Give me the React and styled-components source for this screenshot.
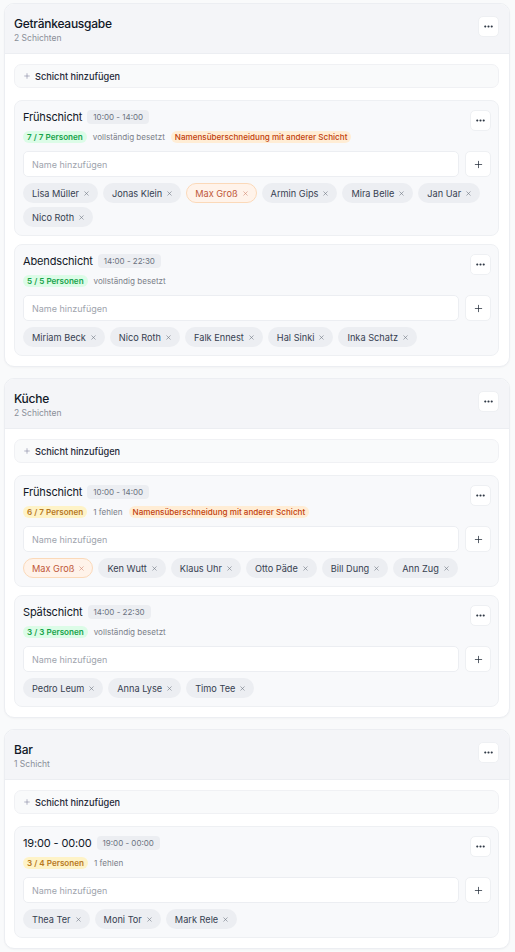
import React from 'react';
import styled, { createGlobalStyle, css } from 'styled-components';
import { Ellipsis, Plus, X } from 'lucide-react';

const GlobalStyle = createGlobalStyle`
  * { box-sizing: border-box; }
  body {
    margin: 0;
    background: #f9fafb;
    font-family: Inter, "Noto Sans", "Liberation Sans", sans-serif;
    color: #1f2937;
    -webkit-font-smoothing: antialiased;
  }
`;

const Page = styled.div`
  display: flex;
  flex-direction: column;
  gap: 11px;
  padding: 3px 5px 6px 4px;
`;

const Section = styled.section`
  background: #ffffff;
  border: 1px solid #eceef2;
  border-radius: 10px;
  overflow: hidden;
  box-shadow: 0 1px 2px rgba(16, 24, 40, 0.03);
`;

const SectionHeader = styled.header`
  display: flex;
  align-items: flex-start;
  justify-content: space-between;
  padding: 12px 10px 9px 9px;
  background: #f4f5f8;
  border-bottom: 1px solid #eceef2;
`;

const SectionTitle = styled.h2`
  margin: 0;
  font-size: 12px;
  line-height: 16px;
  font-weight: 500;
  letter-spacing: -0.25px;
  color: #111827;
`;

const SectionMeta = styled.div`
  font-size: 8.5px;
  line-height: 12px;
  color: #8a8f99;
`;

const IconButton = styled.button`
  display: inline-flex;
  align-items: center;
  justify-content: center;
  flex: none;
  width: ${(p) => p.$size || 21}px;
  height: ${(p) => p.$size || 21}px;
  margin-top: ${(p) => p.$offset || 0}px;
  padding: 0;
  background: #ffffff;
  border: 1px solid #eef0f3;
  border-radius: 5px;
  color: #1f2937;
  cursor: pointer;
`;

const SectionBody = styled.div`
  display: flex;
  flex-direction: column;
  gap: 8px;
  padding: 10px 10px 10px 9px;
`;

const AddShiftButton = styled.button`
  display: flex;
  align-items: center;
  gap: 4px;
  height: 24px;
  margin-bottom: 4px;
  padding: 0 8px;
  background: #f9fafb;
  border: 1px solid #f0f1f4;
  border-radius: 7px;
  font-family: inherit;
  font-size: 9.2px;
  font-weight: 500;
  color: #1f2937;
  text-align: left;
  cursor: pointer;

  svg { color: #8b8ea8; }
`;

const ShiftCard = styled.div`
  display: flex;
  flex-direction: column;
  padding: 8px 7px 8px 8px;
  background: #f8f9fb;
  border: 1px solid #eef0f3;
  border-radius: 8px;
`;

const ShiftTop = styled.div`
  display: flex;
  align-items: flex-start;
  justify-content: space-between;
`;

const ShiftInfo = styled.div`
  display: flex;
  flex-direction: column;
  gap: 7px;
  padding-top: 1px;
`;

const TitleRow = styled.div`
  display: flex;
  align-items: center;
  gap: 5px;
  height: 14px;
`;

const ShiftTitle = styled.span`
  font-size: 11px;
  font-weight: 400;
  letter-spacing: -0.15px;
  color: #111827;
`;

const TimeBadge = styled.span`
  display: inline-flex;
  align-items: center;
  height: 14px;
  padding: 0 6px;
  background: #eceef2;
  border-radius: 4px;
  font-size: 8px;
  color: #6b7280;
`;

const StatusRow = styled.div`
  display: flex;
  align-items: center;
  gap: 6px;
  height: 12px;
`;

const tones = {
  green: css`background: #dcfce7; color: #16a34a;`,
  amber: css`background: #fef3c7; color: #b7791f;`,
  orange: css`background: #ffedd5; color: #c2410c;`,
};

const Pill = styled.span`
  display: inline-flex;
  align-items: center;
  height: 12px;
  padding: 0 4px;
  border-radius: 6px;
  font-size: 8.1px;
  font-weight: ${(p) => (p.$tone === 'orange' ? 500 : 600)};
  ${(p) => tones[p.$tone]}
`;

const StatusNote = styled.span`
  font-size: 8.1px;
  color: #7b808a;
`;

const InputRow = styled.div`
  display: flex;
  gap: 6px;
  margin-top: 8px;
`;

const NameInput = styled.input`
  flex: 1;
  min-width: 0;
  height: 26px;
  padding: 0 8px;
  background: #ffffff;
  border: 1px solid #eceef2;
  border-radius: 5px;
  font-family: inherit;
  font-size: 9px;
  color: #1f2937;
  outline: none;

  &::placeholder { color: #a0a4ad; }
`;

const ChipList = styled.div`
  display: flex;
  flex-wrap: wrap;
  gap: 4px 5px;
  margin-top: 6px;
`;

const Chip = styled.span`
  display: inline-flex;
  align-items: center;
  gap: 4px;
  height: 20px;
  padding: 0 7px 0 8px;
  border-radius: 10px;
  font-size: 9.2px;
  border: 1px solid transparent;
  ${(p) =>
    p.$conflict
      ? css`
          background: #fff3ea;
          border-color: #fbd9b9;
          color: #c0583a;
        `
      : css`
          background: #eceef2;
          color: #374151;
        `}

  svg { opacity: 0.7; }
`;

const sections = [
  {
    name: 'Getränkeausgabe',
    meta: '2 Schichten',
    shifts: [
      {
        name: 'Frühschicht',
        time: '10:00 - 14:00',
        filled: 7,
        total: 7,
        overlap: true,
        people: ['Lisa Müller', 'Jonas Klein', ['Max Groß'], 'Armin Gips', 'Mira Belle', 'Jan Uar', 'Nico Roth'],
      },
      {
        name: 'Abendschicht',
        time: '14:00 - 22:30',
        filled: 5,
        total: 5,
        people: ['Miriam Beck', 'Nico Roth', 'Falk Ennest', 'Hal Sinki', 'Inka Schatz'],
      },
    ],
  },
  {
    name: 'Küche',
    meta: '2 Schichten',
    shifts: [
      {
        name: 'Frühschicht',
        time: '10:00 - 14:00',
        filled: 6,
        total: 7,
        overlap: true,
        people: [['Max Groß'], 'Ken Wutt', 'Klaus Uhr', 'Otto Päde', 'Bill Dung', 'Ann Zug'],
      },
      {
        name: 'Spätschicht',
        time: '14:00 - 22:30',
        filled: 3,
        total: 3,
        people: ['Pedro Leum', 'Anna Lyse', 'Timo Tee'],
      },
    ],
  },
  {
    name: 'Bar',
    meta: '1 Schicht',
    shifts: [
      {
        name: '19:00 - 00:00',
        time: '19:00 - 00:00',
        filled: 3,
        total: 4,
        people: ['Thea Ter', 'Moni Tor', 'Mark Rele'],
      },
    ],
  },
];

function Shift({ shift }) {
  const full = shift.filled >= shift.total;
  const missing = shift.total - shift.filled;
  return (
    <ShiftCard>
      <ShiftTop>
        <ShiftInfo>
          <TitleRow>
            <ShiftTitle>{shift.name}</ShiftTitle>
            <TimeBadge>{shift.time}</TimeBadge>
          </TitleRow>
          <StatusRow>
            <Pill $tone={full ? 'green' : 'amber'}>
              {shift.filled} / {shift.total} Personen
            </Pill>
            <StatusNote>{full ? 'vollständig besetzt' : `${missing} fehlen`}</StatusNote>
            {shift.overlap && <Pill $tone="orange">Namensüberschneidung mit anderer Schicht</Pill>}
          </StatusRow>
        </ShiftInfo>
        <IconButton $offset={1} aria-label="Schicht-Optionen">
          <Ellipsis size={11} strokeWidth={2.6} />
        </IconButton>
      </ShiftTop>
      <InputRow>
        <NameInput placeholder="Name hinzufügen" />
        <IconButton $size={26} aria-label="Hinzufügen">
          <Plus size={11} strokeWidth={1.6} />
        </IconButton>
      </InputRow>
      <ChipList>
        {shift.people.map((p, i) => {
          const conflict = Array.isArray(p);
          const label = conflict ? p[0] : p;
          return (
            <Chip key={i} $conflict={conflict}>
              {label}
              <X size={7} strokeWidth={2} />
            </Chip>
          );
        })}
      </ChipList>
    </ShiftCard>
  );
}

export default function App() {
  return (
    <>
      <GlobalStyle />
      <Page>
        {sections.map((s) => (
          <Section key={s.name}>
            <SectionHeader>
              <div>
                <SectionTitle>{s.name}</SectionTitle>
                <SectionMeta>{s.meta}</SectionMeta>
              </div>
              <IconButton aria-label="Bereich-Optionen">
                <Ellipsis size={11} strokeWidth={2.6} />
              </IconButton>
            </SectionHeader>
            <SectionBody>
              <AddShiftButton>
                <Plus size={8} strokeWidth={2} />
                Schicht hinzufügen
              </AddShiftButton>
              {s.shifts.map((sh, i) => (
                <Shift key={i} shift={sh} />
              ))}
            </SectionBody>
          </Section>
        ))}
      </Page>
    </>
  );
}
